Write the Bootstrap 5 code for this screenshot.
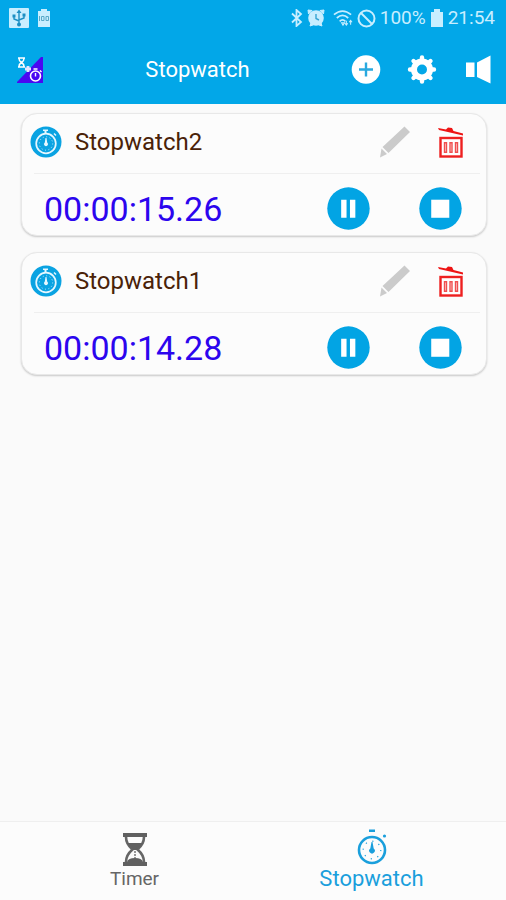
<!DOCTYPE html>
<html lang="en">
<head>
<meta charset="utf-8">
<meta name="viewport" content="width=device-width, initial-scale=1">
<title>Stopwatch</title>
<link href="https://cdn.jsdelivr.net/npm/bootstrap@5.3.0/dist/css/bootstrap.min.css" rel="stylesheet">
<style>
  body { font-family: Roboto, "Liberation Sans", sans-serif; background: #fafafa; }
  svg { display: block; flex: none; }
  .app-top { background: #02a7e8; color: #fff; }
  .status-bar { height: 36px; padding: 0 11px 0 8px; color: #c8eeff; font-size: 19px; line-height: 36px; }
  .status-set { gap: 4px; }
  .toolbar { height: 68px; padding: 0 13px 0 16px; }
  .toolbar h1 { font-size: 22px; line-height: 28px; }
  .tool-actions { gap: 26px; }
  .plain-btn { background: none; border: 0; padding: 0; color: inherit; }
  .watch-list { padding: 9px 19px 16px 21px; gap: 16px; }
  .watch-card { background: #fcfcfc; border: 1px solid #e8e8e8; border-radius: 16px; box-shadow: 0 1px 2px rgba(0,0,0,.2); }
  .watch-head { height: 59px; padding: 0 22px 4px 8px; }
  .watch-name { font-size: 24px; line-height: 32px; color: #4a2208; margin-left: 13px; }
  .watch-line { border-top: 1px solid #efefef; opacity: 1; margin: 0 6px 0 12px; }
  .head-actions { gap: 26px; }
  .watch-body { height: 61px; padding: 8px 24px 0 22px; }
  .watch-time { font-size: 34px; line-height: 40px; color: #2c05ee; }
  .body-actions { gap: 49px; }
  .bottom-nav { border-top: 1px solid #efefef; background: #fcfcfc; }
  .bottom-nav a { color: #666; font-size: 19px; line-height: 26px; padding: 6px 0 8px; }
  .bottom-nav a.active { color: #1a9fdc; font-size: 22px; }
</style>
<script src="https://cdn.jsdelivr.net/npm/bootstrap@5.3.0/dist/js/bootstrap.bundle.min.js"></script>
</head>
<body class="d-flex flex-column min-vh-100">

<svg width="0" height="0" class="position-absolute" aria-hidden="true">
  <defs>
    <symbol id="i-badge" viewBox="0 0 32 32">
      <circle cx="16" cy="16" r="15.500" fill="#0aa3e2"/>
      <circle cx="16" cy="17.500" r="9.800" fill="none" stroke="#e6f7ff" stroke-width="1.700"/>
      <path d="M13 3.500h5v1.500h-1.500v2h-2v-2H13zM24.500 7l2 2-1 1-2-2z" fill="#e6f7ff"/>
      <path d="M15.500 12h1l.7 4.500a2 2 0 1 1-2.400 0z" fill="#e6f7ff"/>
      <circle cx="16" cy="17.500" r="6.700" fill="none" stroke="#c0eaff" stroke-width="1" stroke-dasharray="1 2.508"/>
    </symbol>
    <symbol id="i-pencil" viewBox="0 0 32 32">
      <path d="M24.500 .5l5.500 5.500-21.500 21-6-6zM1.500 22.500l5.500 5.500-7 3.500z" fill="#cbcbcb"/>
    </symbol>
    <symbol id="i-trash" viewBox="0 0 26 32">
      <path d="M0 2l8 1.500 2-2 4 .5 1.500 3 9.500 2.500v2L12 6.500 1 4z" fill="#ee1414"/>
      <rect x="2.500" y="12" width="21" height="18.500" fill="#fff" stroke="#ee2020" stroke-width="2.400"/>
      <path d="M7.500 16v11M13 16v11M18.500 16v11" fill="none" stroke="#f05050" stroke-width="3.400"/>
      <path d="M7.500 17.500v8M13 17.500v8M18.500 17.500v8" fill="none" stroke="#f8a8a8" stroke-width="1"/>
    </symbol>
    <symbol id="i-pause" viewBox="0 0 44 44">
      <circle cx="22" cy="22" r="21.700" fill="#02a4e4"/>
      <path d="M14.500 13h5.500v18.500h-5.500zM23.500 13H29v18.500h-5.500z" fill="#fff"/>
    </symbol>
    <symbol id="i-stop" viewBox="0 0 44 44">
      <circle cx="22" cy="22" r="21.700" fill="#02a4e4"/>
      <path d="M12.500 13h18.500v18.500H12.500z" fill="#fff"/>
    </symbol>
  </defs>
</svg>

<header class="app-top">
  <div class="status-bar d-flex align-items-center justify-content-between">
    <div class="d-flex align-items-center">
      <svg width="21" height="20" viewBox="0 0 21 20" aria-hidden="true">
        <rect x="1" width="20" height="20" rx="1" fill="#c8eeff"/>
        <g fill="none" stroke="#1c8fc4" stroke-width="1.400"><path d="M11 16V4M11 13L6 11V8M11 12l5-2V7"/></g>
        <path d="M11 1.500l2.500 3.500h-5zM4.500 6.500h3v3h-3zM14.500 5.500h3v3h-3z" fill="#1c8fc4"/><circle cx="11" cy="16.500" r="2" fill="#1c8fc4"/>
      </svg>
      <svg class="ms-2" width="14" height="20" viewBox="0 0 14 20" aria-hidden="true">
        <path d="M1 3h3V1h6v2h3v16H1z" fill="#c8eeff"/>
        <g fill="none" stroke="#58a9c9" stroke-width="1"><path d="M2.500 8v5M4.500 8.500h2.500v4H4.500zM9 8.500h2.500v4H9z"/></g>
      </svg>
    </div>
    <div class="status-set d-flex align-items-center">
      <svg width="13" height="18" viewBox="0 0 13 18" fill="none" stroke="#c8eeff" stroke-width="1.800" aria-hidden="true"><path d="M2 4.500l9 8.500-4.500 4V1L11 5l-9 8.500"/></svg>
      <svg width="18" height="18" viewBox="0 0 18 18" aria-hidden="true">
        <path d="M1 1l4 .5L1.500 5zM17 1l-4 .5L16.500 5zM3 17l1-3 2 2zM15 17l-1-3-2 2z" fill="#c8eeff" stroke="#c8eeff"/>
        <circle cx="9" cy="9" r="7.800" fill="#c8eeff"/><path d="M9 5v4.500l3 1.500" stroke="#36a5d4" stroke-width="1.400" fill="none"/>
      </svg>
      <svg class="ms-1" width="20" height="18" viewBox="0 0 21 18" fill="none" stroke="#c8eeff" stroke-width="1.800" aria-hidden="true">
        <path d="M1 5.500Q10 -2 19 5.500M4 9Q10 3.500 16 9M7 12.500Q10 9.500 13 12.500"/>
        <path d="M9 14h3l-1.500 2.500zM14 12v4M12.500 14.500l1.500 2 1.500-2M18.500 16v-4M17 13.500l1.500-2 1.500 2" stroke-width="1.100"/>
      </svg>
      <svg width="19" height="19" viewBox="0 0 19 19" fill="none" stroke="#c8eeff" stroke-width="2" aria-hidden="true"><circle cx="9.500" cy="9.500" r="8"/><path d="M4 4l11 11"/></svg>
      <span>100%</span>
      <svg width="14" height="18" viewBox="0 0 14 18" aria-hidden="true"><path d="M1 3h3V0h6v3h3v15H1z" fill="#c8eeff"/></svg>
      <span>21:54</span>
    </div>
  </div>

  <div class="toolbar d-flex align-items-center">
    <svg width="28" height="28" viewBox="0 0 28 28" role="img" aria-label="Timer and stopwatch">
      <path d="M25 1h2v26H1v-1z" fill="#4a08f2"/>
      <path d="M2 2h7M2 11h7M3 2.500Q3 5 5.500 6.500 3 8 3 10.500M8 2.500Q8 5 5.500 6.500 8 8 8 10.500" fill="none" stroke="#fff" stroke-width="1.500"/>
      <path d="M12 10v6M9 13h6" stroke="#e4e4ff" stroke-width="2.800"/>
      <circle cx="19.500" cy="20" r="5" fill="none" stroke="#fff" stroke-width="1.600"/><path d="M17.500 13h4M19.500 17v3.500M24 14.500l1.500 1.500" stroke="#fff" stroke-width="1.400"/>
    </svg>
    <h1 class="m-0 fw-normal flex-grow-1 text-center">Stopwatch</h1>
    <div class="tool-actions d-flex align-items-center">
      <button class="plain-btn" type="button" aria-label="Add">
        <svg width="30" height="30" viewBox="0 0 30 30"><circle cx="15" cy="14.500" r="14.300" fill="#fff"/><path d="M15 7.500v14M8 14.500h14" stroke="#29a9df" stroke-width="2.400"/></svg>
      </button>
      <button class="plain-btn" type="button" aria-label="Settings">
        <svg width="30" height="30" viewBox="0 0 30 30" fill="none" stroke="#fff">
          <circle cx="15" cy="14.500" r="8" stroke-width="6"/>
          <path d="M15 2.500v3M15 23.500v3M3 14.500h3M24 14.500h3M6.500 6l2 2M21.500 21l2 2M23.500 6l-2 2M8.500 21l-2 2" stroke-width="4.400" stroke-linecap="round"/>
        </svg>
      </button>
      <button class="plain-btn" type="button" aria-label="Sound">
        <svg width="30" height="30" viewBox="0 0 30 30" fill="#fff"><path d="M3 7.500h8.500V22H3zM14 7.500L27.500 .5v28L14 22z"/></svg>
      </button>
    </div>
  </div>
</header>

<main class="watch-list d-flex flex-column flex-grow-1">
  <section class="watch-card">
    <div class="watch-head d-flex align-items-center">
      <svg width="32" height="32" aria-hidden="true"><use href="#i-badge"/></svg>
      <h2 class="watch-name mb-0 fw-normal me-auto">Stopwatch2</h2>
      <div class="head-actions d-flex">
        <button class="plain-btn" type="button" aria-label="Rename Stopwatch2"><svg width="32" height="32"><use href="#i-pencil"/></svg></button>
        <button class="plain-btn" type="button" aria-label="Delete Stopwatch2"><svg width="26" height="32"><use href="#i-trash"/></svg></button>
      </div>
    </div>
    <hr class="watch-line">
    <div class="watch-body d-flex align-items-center justify-content-between">
      <span class="watch-time">00:00:15.26</span>
      <div class="body-actions d-flex">
        <button class="plain-btn" type="button" aria-label="Pause"><svg width="43" height="43"><use href="#i-pause"/></svg></button>
        <button class="plain-btn" type="button" aria-label="Stop"><svg width="43" height="43"><use href="#i-stop"/></svg></button>
      </div>
    </div>
  </section>

  <section class="watch-card">
    <div class="watch-head d-flex align-items-center">
      <svg width="32" height="32" aria-hidden="true"><use href="#i-badge"/></svg>
      <h2 class="watch-name mb-0 fw-normal me-auto">Stopwatch1</h2>
      <div class="head-actions d-flex">
        <button class="plain-btn" type="button" aria-label="Rename Stopwatch1"><svg width="32" height="32"><use href="#i-pencil"/></svg></button>
        <button class="plain-btn" type="button" aria-label="Delete Stopwatch1"><svg width="26" height="32"><use href="#i-trash"/></svg></button>
      </div>
    </div>
    <hr class="watch-line">
    <div class="watch-body d-flex align-items-center justify-content-between">
      <span class="watch-time">00:00:14.28</span>
      <div class="body-actions d-flex">
        <button class="plain-btn" type="button" aria-label="Pause"><svg width="43" height="43"><use href="#i-pause"/></svg></button>
        <button class="plain-btn" type="button" aria-label="Stop"><svg width="43" height="43"><use href="#i-stop"/></svg></button>
      </div>
    </div>
  </section>
</main>

<nav class="bottom-nav d-flex px-3" aria-label="Sections">
  <a href="#timer" class="col d-flex flex-column align-items-center text-decoration-none">
    <svg width="26" height="38" viewBox="0 -3 26 38" aria-hidden="true">
      <path d="M1 2h24v4H1zM1 31h24v4H1z" fill="#606060"/>
      <path d="M4 6Q4 13 10.500 18.500 4 24 4 31M22 6Q22 13 15.500 18.500 22 24 22 31" fill="none" stroke="#666" stroke-width="2.600"/>
      <path d="M5 12h16q-2 4-6 7h-4Q7 16 5 12zM5 31q1-4 8-4t8 4z" fill="#606060"/><path d="M13 20v7" stroke="#777" stroke-width="1.500" stroke-dasharray="2 1"/>
    </svg>
    <span>Timer</span>
  </a>
  <a href="#stopwatch" class="col active d-flex flex-column align-items-center text-decoration-none" aria-current="page">
    <svg width="34" height="38" viewBox="0 0 34 38" aria-hidden="true">
      <circle cx="17" cy="22" r="13" fill="none" stroke="currentColor" stroke-width="2.600"/>
      <path d="M14 1.500h6v2.500h-6z" fill="currentColor"/><circle cx="29.500" cy="8" r="1.600" fill="currentColor"/>
      <path d="M16.500 14h1l1.200 6.500a2.800 2.800 0 1 1-3.400 0z" fill="currentColor"/>
      <circle cx="17" cy="22" r="8.800" fill="none" stroke="currentColor" stroke-width="1.200" stroke-dasharray="1.200 5.712"/>
    </svg>
    <span>Stopwatch</span>
  </a>
</nav>
</body>
</html>
